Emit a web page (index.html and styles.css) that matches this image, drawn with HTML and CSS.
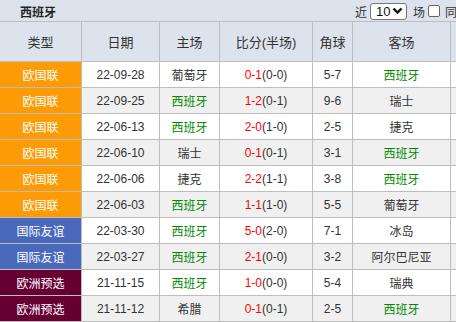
FILE: index.html
```html
<!DOCTYPE html>
<html lang="zh">
<head>
<meta charset="utf-8">
<link rel="stylesheet" href="styles.css">
</head>
<body>
<div class="topbar">
  <span class="title">西班牙</span>
  <div class="filter">
    <span>近</span>
    <span class="sel">10<svg width="11" height="8" viewBox="0 0 11 8"><path d="M1.5 1.5 L5.5 5.5 L9.5 1.5" fill="none" stroke="#111" stroke-width="2.4"/></svg></span>
    <span>场</span>
    <span class="cb"></span>
    <span>同</span>
  </div>
</div>
<table class="games">
  <colgroup>
    <col class="c1"><col class="c2"><col class="c3"><col class="c4"><col class="c5"><col class="c6"><col class="c7">
  </colgroup>
  <thead>
    <tr><th>类型</th><th>日期</th><th>主场</th><th>比分(半场)</th><th>角球</th><th>客场</th><th></th></tr>
  </thead>
  <tbody>
    <tr><td class="t nl">欧国联</td><td>22-09-28</td><td>葡萄牙</td><td><span class="ft">0-1</span>(0-0)</td><td>5-7</td><td class="us">西班牙</td><td></td></tr>
    <tr><td class="t nl">欧国联</td><td>22-09-25</td><td class="us">西班牙</td><td><span class="ft">1-2</span>(0-1)</td><td>9-6</td><td>瑞士</td><td></td></tr>
    <tr><td class="t nl">欧国联</td><td>22-06-13</td><td class="us">西班牙</td><td><span class="ft">2-0</span>(1-0)</td><td>2-5</td><td>捷克</td><td></td></tr>
    <tr><td class="t nl">欧国联</td><td>22-06-10</td><td>瑞士</td><td><span class="ft">0-1</span>(0-1)</td><td>3-1</td><td class="us">西班牙</td><td></td></tr>
    <tr><td class="t nl">欧国联</td><td>22-06-06</td><td>捷克</td><td><span class="ft">2-2</span>(1-1)</td><td>3-8</td><td class="us">西班牙</td><td></td></tr>
    <tr><td class="t nl">欧国联</td><td>22-06-03</td><td class="us">西班牙</td><td><span class="ft">1-1</span>(1-0)</td><td>5-5</td><td>葡萄牙</td><td></td></tr>
    <tr><td class="t fr">国际友谊</td><td>22-03-30</td><td class="us">西班牙</td><td><span class="ft">5-0</span>(2-0)</td><td>7-1</td><td>冰岛</td><td></td></tr>
    <tr><td class="t fr">国际友谊</td><td>22-03-27</td><td class="us">西班牙</td><td><span class="ft">2-1</span>(0-0)</td><td>3-2</td><td>阿尔巴尼亚</td><td></td></tr>
    <tr><td class="t eq">欧洲预选</td><td>21-11-15</td><td class="us">西班牙</td><td><span class="ft">1-0</span>(0-0)</td><td>5-4</td><td>瑞典</td><td></td></tr>
    <tr><td class="t eq">欧洲预选</td><td>21-11-12</td><td>希腊</td><td><span class="ft">0-1</span>(0-1)</td><td>2-5</td><td class="us">西班牙</td><td></td></tr>
  </tbody>
</table>
</body>
</html>
```
FILE: styles.css
```css
html, body {
  margin: 0;
  padding: 0;
  overflow: hidden;
  background: #dce3ed;
  font-family: "Liberation Sans", "Noto Sans CJK SC", sans-serif;
  font-size: 12px;
  color: #333;
}
.topbar {
  height: 22px;
  display: flex;
  align-items: center;
  justify-content: space-between;
  padding-left: 20px;
  white-space: nowrap;
}
.title {
  font-weight: bold;
  font-size: 12px;
  color: #222;
}
.filter {
  display: flex;
  align-items: center;
  font-size: 12px;
  color: #333;
  margin-right: -1px;
}
.sel {
  display: inline-flex;
  align-items: center;
  justify-content: space-between;
  box-sizing: border-box;
  width: 37px;
  height: 17px;
  margin: 0 6px 0 3px;
  padding: 0 3px 0 5px;
  background: #fff;
  border: 1px solid #777;
  border-radius: 3px;
  font-size: 13px;
  color: #111;
}
.cb {
  display: inline-block;
  box-sizing: border-box;
  width: 12px;
  height: 12px;
  margin: 0 5px 0 3px;
  border: 1px solid #666;
  border-radius: 2px;
  background: #fff;
}
.games {
  table-layout: fixed;
  width: 512px;
  border-collapse: separate;
  border-spacing: 1px;
  background: #bdbdbd;
  margin: -1px 0 0 -1px;
}
.games th, .games td {
  padding: 0;
  text-align: center;
  white-space: nowrap;
  overflow: hidden;
}
.c1 { width: 81px; }
.c2 { width: 77px; }
.c3 { width: 59px; }
.c4 { width: 92px; }
.c5 { width: 39px; }
.c6 { width: 97px; }
.c7 { width: 60px; }
.games thead tr { height: 39px; }
.games th {
  background: #dce3ed;
  font-weight: normal;
  font-size: 13px;
  color: #333;
}
.games tbody tr { height: 25px; }
.games tbody tr:nth-child(odd) td { background: #fff; }
.games tbody tr:nth-child(even) td { background: #f0f0f0; }
.games td { font-size: 12px; color: #333; }
.games tbody tr td.t { color: #fff; font-size: 12px; }
.games tbody tr td.nl { background: #fd9b06; }
.games tbody tr td.fr { background: #4a69bd; }
.games tbody tr td.eq { background: #660033; }
.games td.us { color: #080; }
.ft { color: #f00; }
```
